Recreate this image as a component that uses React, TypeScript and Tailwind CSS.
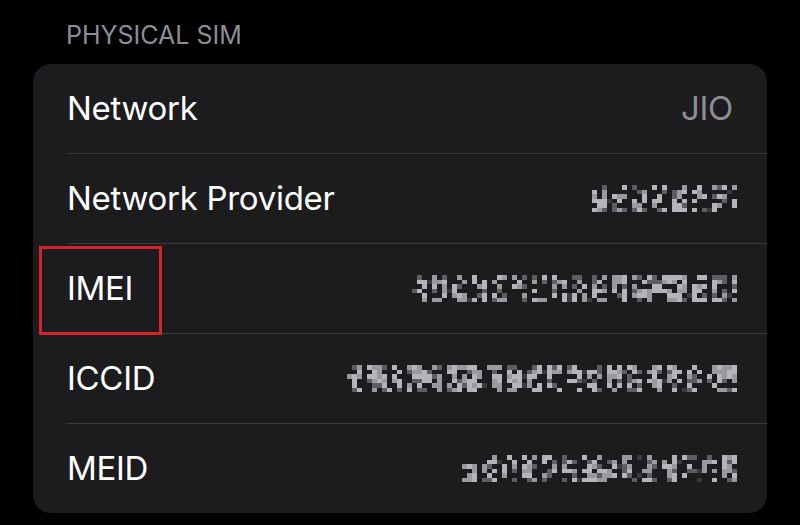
import React from "react";

function rng(seed: number) {
  let s = seed >>> 0;
  return () => {
    s = (s * 1664525 + 1013904223) >>> 0;
    return s / 4294967296;
  };
}

function Mosaic({ width, seed }: { width: number; seed: number }) {
  const cell = 5;
  const rows = 6;
  const cols = Math.floor(width / cell);
  const r = rng(seed);
  const rects: React.ReactNode[] = [];
  for (let c = 0; c < cols; c++) {
    const inChar = c % 4 !== 3 || r() < 0.2;
    for (let y = 0; y < rows; y++) {
      const v = r();
      if (!inChar) {
        if (v < 0.1) {
          rects.push(<rect key={`${c}-${y}`} x={c * cell} y={y * 4.5} width={cell} height={4.5} fill="#3a3a3d" />);
        }
        continue;
      }
      let fill = "";
      if (v < 0.38) fill = "";
      else if (v < 0.52) fill = "#5e5e62";
      else if (v < 0.72) fill = "#9a9a9e";
      else fill = "#b5b5b9";
      if (fill) rects.push(<rect key={`${c}-${y}`} x={c * cell} y={y * 4.5} width={cell} height={4.5} fill={fill} />);
    }
  }
  return (
    <svg width={cols * cell} height={27} viewBox={`0 0 ${cols * cell} 27`} shapeRendering="crispEdges">
      {rects}
    </svg>
  );
}

type Row = { label: string; value?: string; mosaic?: { w: number; seed: number } };

const rows: Row[] = [
  { label: "Network", value: "JIO" },
  { label: "Network Provider", mosaic: { w: 145, seed: 7 } },
  { label: "IMEI", mosaic: { w: 326, seed: 21 } },
  { label: "ICCID", mosaic: { w: 391, seed: 42 } },
  { label: "MEID", mosaic: { w: 279, seed: 99 } },
];

export default function App() {
  return (
    <div
      className="w-[800px] h-[525px] bg-black overflow-hidden"
      style={{ fontFamily: "Inter, 'Liberation Sans', sans-serif" }}
    >
      <div className="pl-[66px] pt-[20px] h-[64px] text-[25px] leading-[30px] tracking-[0px] text-[#8d8d92]">
        PHYSICAL SIM
      </div>
      <div className="ml-[33px] w-[734px] bg-[#1c1c1e] rounded-[18px] overflow-hidden">
        {rows.map((row, i) => (
          <div key={row.label} className="relative pl-[34px]">
            {i === 2 && (
              <div className="absolute left-[6px] top-[2px] w-[123px] h-[89px] border-[3px] border-[#d3242c] pointer-events-none" />
            )}
            <div className="h-[89px] flex items-center justify-between pr-[30px]">
              <span className="text-[33px] text-white tracking-[-0.3px]">{row.label}</span>
              {row.value && <span className="text-[33px] text-[#8d8d92] tracking-[-0.3px] pr-[4px]">{row.value}</span>}
              {row.mosaic && <Mosaic width={row.mosaic.w} seed={row.mosaic.seed} />}
            </div>
            {i < rows.length - 1 && <div className="h-px bg-[#3a3a3c]" />}
          </div>
        ))}
      </div>
    </div>
  );
}
